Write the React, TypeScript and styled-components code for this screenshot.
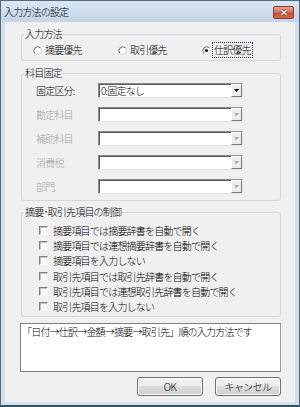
import styled, { createGlobalStyle } from "styled-components";

const GlobalStyle = createGlobalStyle`
  body {
    margin: 0;
    background: #ffffff;
  }
  * {
    box-sizing: border-box;
  }
`;

const UI_FONT = `"Noto Sans CJK JP", "Liberation Sans", sans-serif`;

const Window = styled.div`
  width: 300px;
  height: 407px;
  display: flex;
  flex-direction: column;
  border: 1px solid #56687a;
  border-bottom: 2px solid #2f5566;
  background: #d6e0eb;
  font-family: ${UI_FONT};
  font-size: 10px;
  font-weight: 300;
  letter-spacing: -0.8px;
  color: #000;
`;

const TitleBar = styled.div`
  height: 21px;
  flex: none;
  display: flex;
  align-items: center;
  justify-content: space-between;
  padding: 0 5px 0 3px;
  background: linear-gradient(#dae6f3, #c4d5e8);
`;

const Title = styled.span`
  line-height: 12px;
`;

const CloseButton = styled.div`
  width: 21px;
  height: 13px;
  margin-top: 1px;
  display: flex;
  align-items: center;
  justify-content: center;
  border: 1px solid #8a3a2c;
  border-radius: 2px;
  background: linear-gradient(#eaa592, #d46a52 50%, #c2452c 51%, #d46a4f);
`;

const Client = styled.div`
  flex: 1;
  display: flex;
  flex-direction: column;
  margin: 0 4px 3px 4px;
  padding: 6px 14px 0 16px;
  background: #f0f0f0;
`;

const Group = styled.fieldset<{ $gap?: number }>`
  margin: ${(p) => p.$gap ?? 0}px 0 0 0;
  padding: 0;
  border: 1px solid #d0d8de;
  border-radius: 3px;
  min-width: 0;
`;

const Legend = styled.legend`
  margin-left: 2px;
  padding: 0 1px;
  line-height: 12px;
`;

const RadioRow = styled.div`
  display: grid;
  grid-template-columns: 85px 84px auto;
  padding: 4px 0 4px 11px;
`;

const RadioItem = styled.label`
  display: flex;
  align-items: center;
  gap: 4px;
  height: 12px;
`;

const RadioText = styled.span<{ $focus?: boolean }>`
  line-height: 12px;
  padding: 1px 1px;
  margin: -2px -2px;
  outline: ${(p) => (p.$focus ? "1px dotted #333" : "none")};
  outline-offset: 0;
`;

const FieldRows = styled.div`
  display: flex;
  flex-direction: column;
  gap: 9px;
  padding: 4px 0 6px 14px;
`;

const FieldRow = styled.div`
  display: flex;
  align-items: center;
  height: 15px;
`;

const FieldLabel = styled.span<{ $disabled?: boolean }>`
  width: 62px;
  color: ${(p) => (p.$disabled ? "#a3a3a3" : "#000")};
`;

const Combo = styled.div`
  width: 145px;
  height: 15px;
  display: flex;
  align-items: stretch;
  border-style: solid;
  border-width: 1px;
  border-color: #8c8c8c #e6e6e6 #e6e6e6 #8c8c8c;
  box-shadow: inset 1px 1px 0 #5a5a5a;
  background: #fff;
`;

const ComboText = styled.span`
  flex: 1;
  padding-left: 2px;
  line-height: 13px;
`;

const DropButton = styled.div`
  width: 11px;
  display: flex;
  align-items: center;
  justify-content: center;
  border-style: solid;
  border-width: 1px;
  border-color: #ffffff #7a7a7a #7a7a7a #ffffff;
  background: #ececec;
`;

const CheckRows = styled.div`
  display: flex;
  flex-direction: column;
  gap: 0.4px;
  padding: 4.5px 0 2px 17px;
`;

const CheckRow = styled.label`
  display: flex;
  align-items: center;
  gap: 5px;
  height: 15px;
`;

const CheckBox = styled.span`
  width: 9px;
  height: 9px;
  flex: none;
  border-style: solid;
  border-width: 1px;
  border-color: #808080 #f4f4f4 #f4f4f4 #808080;
  box-shadow: inset 1px 1px 0 #c4c4c4;
  background: #f8f8f8;
`;

const DescBox = styled.div`
  margin: 6px 0 0 -1px;
  height: 49px;
  padding: 2px 1px;
  border: 1px solid #7f7f7f;
  border-right-color: #9a9a9a;
  background: #fff;
  line-height: 12px;
`;

const ButtonRow = styled.div`
  display: flex;
  justify-content: flex-end;
  gap: 12px;
  margin-top: 5px;
`;

const PushButton = styled.button`
  width: 66px;
  height: 19px;
  padding: 0;
  font-family: ${UI_FONT};
  font-size: 10px;
  font-weight: 300;
  letter-spacing: -0.6px;
  color: #000;
  border: 1px solid #707070;
  border-radius: 3px;
  background: linear-gradient(#f3f3f3, #ebebeb 45%, #dddddd 50%, #cfcfcf);
  box-shadow: inset 0 0 0 1px #fbfbfb;
`;

const Radio = ({ checked }: { checked?: boolean }) => (
  <svg width="9" height="9" viewBox="0 0 9 9">
    <circle cx="4.5" cy="4.5" r="4" fill="#fff" stroke="#d4d4d4" />
    <path d="M1.7 7.3 A4 4 0 0 1 7.3 1.7" fill="none" stroke="#6e6e6e" />
    {checked && <circle cx="4.5" cy="4.5" r="1.6" fill="#111" />}
  </svg>
);

const Arrow = ({ disabled }: { disabled?: boolean }) => (
  <svg width="5" height="3" viewBox="0 0 5 3">
    <path d="M0 0 H5 L2.5 3 Z" fill={disabled ? "#a8a8a8" : "#000"} />
  </svg>
);

const fixedFields = [
  { label: "固定区分:", value: "0:固定なし", disabled: false },
  { label: "勘定科目", value: "", disabled: true },
  { label: "補助科目", value: "", disabled: true },
  { label: "消費税", value: "", disabled: true },
  { label: "部門", value: "", disabled: true },
];

const checks = [
  "摘要項目では摘要辞書を自動で開く",
  "摘要項目では連想摘要辞書を自動で開く",
  "摘要項目を入力しない",
  "取引先項目では取引先辞書を自動で開く",
  "取引先項目では連想取引先辞書を自動で開く",
  "取引先項目を入力しない",
];

export default function App() {
  return (
    <>
      <GlobalStyle />
      <Window>
        <TitleBar>
          <Title>入力方法の設定</Title>
          <CloseButton>
            <svg width="8" height="7" viewBox="0 0 8 7">
              <path d="M1 1 L7 6 M7 1 L1 6" stroke="#7a2a1c" strokeWidth="2.6" />
              <path d="M1 1 L7 6 M7 1 L1 6" stroke="#fff" strokeWidth="1.5" />
            </svg>
          </CloseButton>
        </TitleBar>
        <Client>
          <Group>
            <Legend>入力方法</Legend>
            <RadioRow>
              <RadioItem>
                <Radio />
                <RadioText>摘要優先</RadioText>
              </RadioItem>
              <RadioItem>
                <Radio />
                <RadioText>取引優先</RadioText>
              </RadioItem>
              <RadioItem>
                <Radio checked />
                <RadioText $focus>仕訳優先</RadioText>
              </RadioItem>
            </RadioRow>
          </Group>

          <Group $gap={6}>
            <Legend>科目固定</Legend>
            <FieldRows>
              {fixedFields.map((f) => (
                <FieldRow key={f.label}>
                  <FieldLabel $disabled={f.disabled}>{f.label}</FieldLabel>
                  <Combo>
                    <ComboText>{f.value}</ComboText>
                    <DropButton>
                      <Arrow disabled={f.disabled} />
                    </DropButton>
                  </Combo>
                </FieldRow>
              ))}
            </FieldRows>
          </Group>

          <Group $gap={5}>
            <Legend>摘要･取引先項目の制御</Legend>
            <CheckRows>
              {checks.map((c) => (
                <CheckRow key={c}>
                  <CheckBox />
                  <span>{c}</span>
                </CheckRow>
              ))}
            </CheckRows>
          </Group>

          <DescBox>「日付→仕訳→金額→摘要→取引先」順の入力方法です</DescBox>

          <ButtonRow>
            <PushButton>OK</PushButton>
            <PushButton>キャンセル</PushButton>
          </ButtonRow>
        </Client>
      </Window>
    </>
  );
}
